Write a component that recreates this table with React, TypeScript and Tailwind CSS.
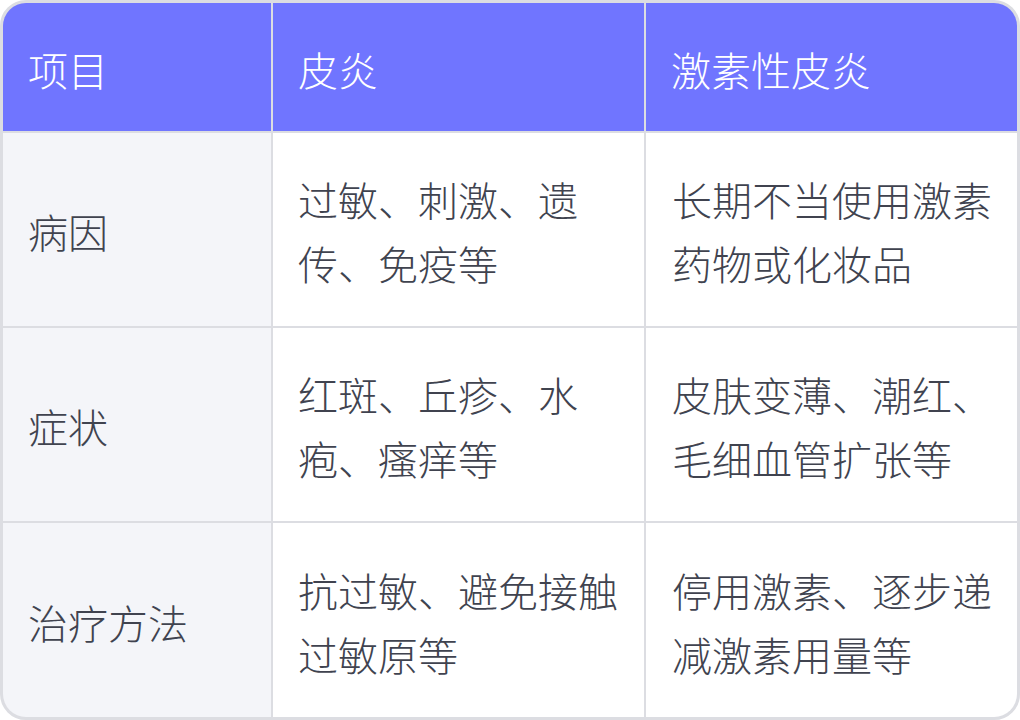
import React from "react";

const rows = [
  ["病因", "过敏、刺激、遗传、免疫等", "长期不当使用激素药物或化妆品"],
  ["症状", "红斑、丘疹、水疱、瘙痒等", "皮肤变薄、潮红、毛细血管扩张等"],
  ["治疗方法", "抗过敏、避免接触过敏原等", "停用激素、逐步递减激素用量等"],
];

export default function App() {
  return (
    <div
      className="w-[1020px] h-[720px] bg-white"
      style={{ fontFamily: '"Noto Sans CJK SC", "Noto Sans", sans-serif' }}
    >
      <div className="w-full h-full rounded-[26px] border-[3px] border-[#dcdde2] overflow-hidden bg-[#dcdde2] grid grid-cols-[268px_371px_371px] grid-rows-[128px_193px_193px_194px] gap-[2px] font-light">
        <div className="bg-[#7075ff] text-white text-[40px] leading-[64px] flex items-center pl-[25px] pr-6 pt-[3px]">项目</div>
        <div className="bg-[#7075ff] text-white text-[40px] leading-[64px] flex items-center pl-[25px] pr-6 pt-[3px]">皮炎</div>
        <div className="bg-[#7075ff] text-white text-[40px] leading-[64px] flex items-center pl-[25px] pr-6 pt-[3px]">激素性皮炎</div>
        {rows.map((r, i) => (
          <React.Fragment key={i}>
            <div className="bg-[#f4f5f9] text-[#40434f] text-[40px] leading-[64px] flex items-center pl-[25px] pr-6 pt-[3px]">{r[0]}</div>
            <div className="bg-white text-[#40434f] text-[40px] leading-[64px] flex items-center pl-[25px] pr-5 pt-[3px]">{r[1]}</div>
            <div className="bg-white text-[#40434f] text-[40px] leading-[64px] flex items-center pl-[26px] pr-5 pt-[3px]">{r[2]}</div>
          </React.Fragment>
        ))}
      </div>
    </div>
  );
}
